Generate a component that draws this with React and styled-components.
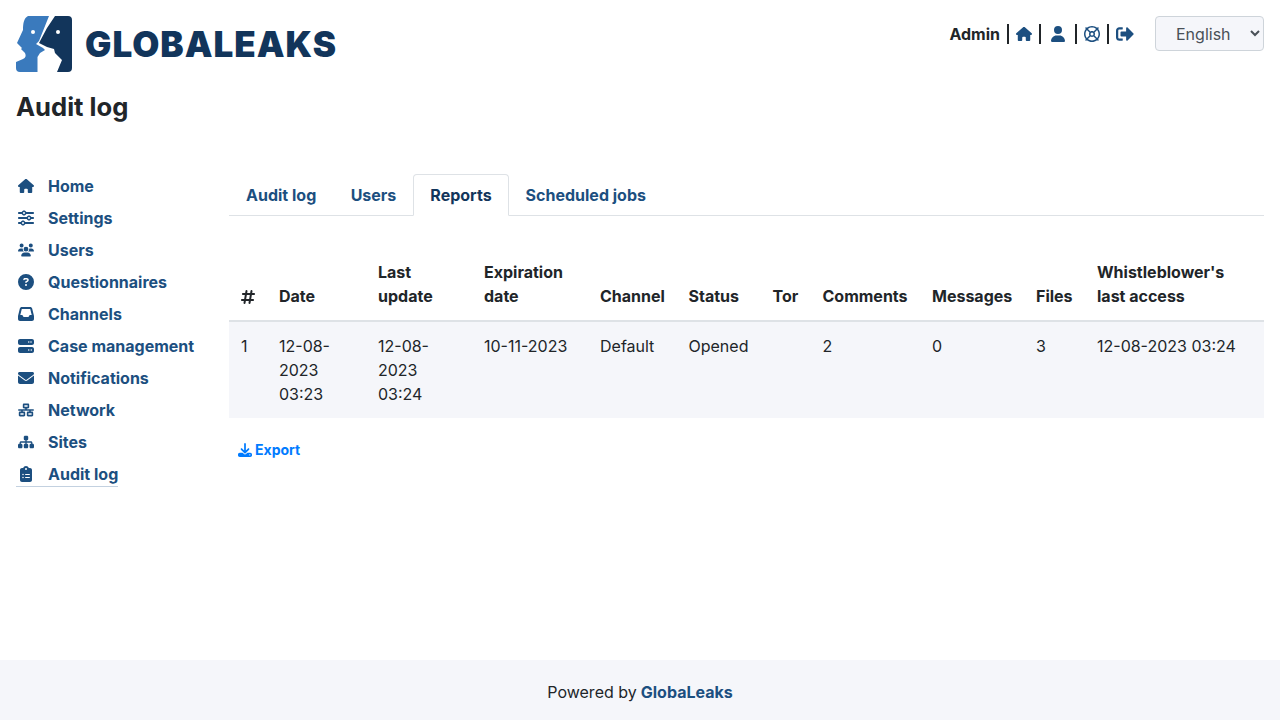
import React from "react";
import styled, { createGlobalStyle } from "styled-components";
import {
	FaHouse,
	FaSliders,
	FaUsers,
	FaCircleQuestion,
	FaInbox,
	FaServer,
	FaEnvelope,
	FaNetworkWired,
	FaSitemap,
	FaClipboardList,
	FaUser,
	FaRegLifeRing,
	FaDownload,
	FaHashtag,
} from "react-icons/fa6";
import { FaSignOutAlt } from "react-icons/fa";

const GlobalStyle = createGlobalStyle`
	html, body {
		margin: 0;
		padding: 0;
		background: #fff;
	}
	body {
		font-family: Inter, "Liberation Sans", sans-serif;
		font-size: 16px;
		line-height: 24px;
		color: #212529;
	}
`;

const Page = styled.div`
	display: flex;
	flex-direction: column;
	height: 720px;
	overflow: hidden;
`;

const Header = styled.header`
	display: flex;
	justify-content: space-between;
	align-items: flex-start;
	height: 56px;
	padding: 16px 16px 0;
`;

const Brand = styled.div`
	display: flex;
	align-items: center;
	gap: 13px;
`;

const Wordmark = styled.span`
	font-size: 35px;
	line-height: 56px;
	font-weight: 900;
	letter-spacing: 1px;
	color: #12355b;
`;

const UserBar = styled.div`
	display: flex;
	align-items: center;
	height: 35px;
`;

const UserLinks = styled.div`
	display: flex;
	align-items: center;
	gap: 7px;
	margin-right: 21px;
	font-weight: 700;
	color: #212529;
`;

const Sep = styled.span`
	display: inline-block;
	width: 2px;
	height: 20px;
	background: #212529;
`;

const TopIcon = styled.span`
	display: flex;
	padding: 0 ${({ $pad }) => $pad || 0}px;
	color: #1c4f80;

	svg {
		width: auto;
	}
`;

const LangSelect = styled.select`
	width: 109px;
	height: 35px;
	padding: 0 0 0 16px;
	font: 400 16px Inter, "Liberation Sans", sans-serif;
	color: #495057;
	background: #f5f6fa;
	border: 1px solid #ced4da;
	border-radius: 4px;
`;

const PageTitle = styled.h1`
	margin: 0;
	padding: 19px 16px 0;
	font-size: 25.6px;
	line-height: 32px;
	font-weight: 700;
	color: #212529;
`;

const Body = styled.div`
	display: grid;
	grid-template-columns: 213px 1fr;
	flex: 1;
	padding: 47px 16px 0;
`;

const Nav = styled.nav`
	display: flex;
	flex-direction: column;
	align-items: flex-start;
`;

const NavItem = styled.a`
	display: flex;
	align-items: center;
	box-sizing: border-box;
	height: ${({ $active }) => ($active ? "29px" : "32px")};
	padding-top: ${({ $active }) => ($active ? "4px" : "0")};
	border-bottom: ${({ $active }) => ($active ? "1px solid #c3d1e0" : "none")};
	font-weight: 700;
	color: #1c4f80;
`;

const NavIcon = styled.span`
	display: flex;
	justify-content: center;
	width: 20px;
	margin-right: 12px;
	font-size: 16px;

	svg {
		width: auto;
	}
`;

const Main = styled.main`
	min-width: 0;
	padding-top: 4px;
`;

const Tabs = styled.div`
	display: flex;
	height: 42px;
	box-sizing: border-box;
	border-bottom: 1px solid #dee2e6;
`;

const Tab = styled.a`
	box-sizing: border-box;
	height: 42px;
	padding: 8px 16px;
	font-weight: 700;
	line-height: 24px;
	color: ${({ $active }) => ($active ? "#12355b" : "#1c4f80")};
	background: ${({ $active }) => ($active ? "#fff" : "transparent")};
	border: 1px solid ${({ $active }) => ($active ? "#dee2e6" : "transparent")};
	border-bottom-color: ${({ $active }) => ($active ? "#fff" : "transparent")};
	border-radius: 4px 4px 0 0;

	&:first-child {
		margin-right: 0.4px;
	}
`;

const Table = styled.table`
	width: 1035px;
	margin-top: 32px;
	border-collapse: collapse;
	table-layout: fixed;
`;

const Th = styled.th`
	padding: 12px;
	text-align: left;
	vertical-align: bottom;
	font-weight: 700;
	border-bottom: 2px solid #dee2e6;
`;

const HashIcon = styled(FaHashtag)`
	width: auto;
	margin-left: -1px;
	vertical-align: -3px;
`;

const Td = styled.td`
	padding: 12px;
	vertical-align: top;
	background: #f5f6fa;
`;

const ExportButton = styled.a`
	display: inline-flex;
	align-items: center;
	gap: 3px;
	margin: 20px 0 0 9px;
	font-size: 14px;
	line-height: 24px;
	font-weight: 700;
	color: #007bff;
`;

const Footer = styled.footer`
	display: flex;
	align-items: center;
	justify-content: center;
	gap: 4px;
	height: 60px;
	padding-top: 4px;
	box-sizing: border-box;
	background: #f5f6fa;
`;

const FooterLink = styled.a`
	font-weight: 700;
	color: #1c4f80;
`;

const navItems = [
	[FaHouse, "Home"],
	[FaSliders, "Settings"],
	[FaUsers, "Users"],
	[FaCircleQuestion, "Questionnaires"],
	[FaInbox, "Channels"],
	[FaServer, "Case management"],
	[FaEnvelope, "Notifications"],
	[FaNetworkWired, "Network"],
	[FaSitemap, "Sites"],
	[FaClipboardList, "Audit log"],
];

const columns = [
	[<HashIcon key="hash" size={16} />, 38],
	["Date", 99],
	["Last update", 106],
	["Expiration date", 116],
	["Channel", 88.5],
	["Status", 84],
	["Tor", 50],
	["Comments", 109.5],
	["Messages", 104],
	["Files", 61],
	["Whistleblower's last access", 179],
];

const row = ["1", "12-08-2023 03:23", "12-08-2023 03:24", "10-11-2023", "Default", "Opened", "", "2", "0", "3", "12-08-2023 03:24"];

function Logo() {
	return (
		<svg width="56" height="56" viewBox="0 0 56 56">
			<path
				fill="#3a7abd"
				d="M12 0H33L23 25L20 28L27 32L29 34L24 37L21.5 41V56H4Q0 56 0 52V46L7 43Q11 41 9 37L5 33L6 32L1 27L7 14C7 7 8 2 12 0Z"
			/>
			<path
				fill="#12355b"
				d="M39 0H52Q56 0 56 4V52Q56 56 52 56H41L46 44L39 37L38 33L31 31L23 27L31 12Z"
			/>
			<circle cx="17" cy="16" r="2" fill="#fff" />
			<circle cx="42" cy="16" r="2" fill="#fff" />
		</svg>
	);
}

export default function App() {
	return (
		<Page>
			<GlobalStyle />
			<Header>
				<Brand>
					<Logo />
					<Wordmark>GLOBALEAKS</Wordmark>
				</Brand>
				<UserBar>
					<UserLinks>
						Admin
						<Sep />
						<TopIcon><FaHouse size={16} /></TopIcon>
						<Sep />
						<TopIcon $pad={2}><FaUser size={16} /></TopIcon>
						<Sep />
						<TopIcon><FaRegLifeRing size={16} /></TopIcon>
						<Sep />
						<TopIcon><FaSignOutAlt size={18} /></TopIcon>
					</UserLinks>
					<LangSelect defaultValue="English">
						<option>English</option>
					</LangSelect>
				</UserBar>
			</Header>
			<PageTitle>Audit log</PageTitle>
			<Body>
				<Nav>
					{navItems.map(([Icon, label], i) => (
						<NavItem key={label} $active={i === navItems.length - 1}>
							<NavIcon><Icon /></NavIcon>
							{label}
						</NavItem>
					))}
				</Nav>
				<Main>
					<Tabs>
						<Tab>Audit log</Tab>
						<Tab>Users</Tab>
						<Tab $active>Reports</Tab>
						<Tab>Scheduled jobs</Tab>
					</Tabs>
					<Table>
						<colgroup>
							{columns.map(([, width], i) => (
								<col key={i} style={{ width }} />
							))}
						</colgroup>
						<thead>
							<tr>
								{columns.map(([name], i) => (
									<Th key={i}>{name}</Th>
								))}
							</tr>
						</thead>
						<tbody>
							<tr>
								{row.map((value, i) => (
									<Td key={i}>{value}</Td>
								))}
							</tr>
						</tbody>
					</Table>
					<ExportButton><FaDownload size={14} />Export</ExportButton>
				</Main>
			</Body>
			<Footer>
				Powered by <FooterLink>GlobaLeaks</FooterLink>
			</Footer>
		</Page>
	);
}
